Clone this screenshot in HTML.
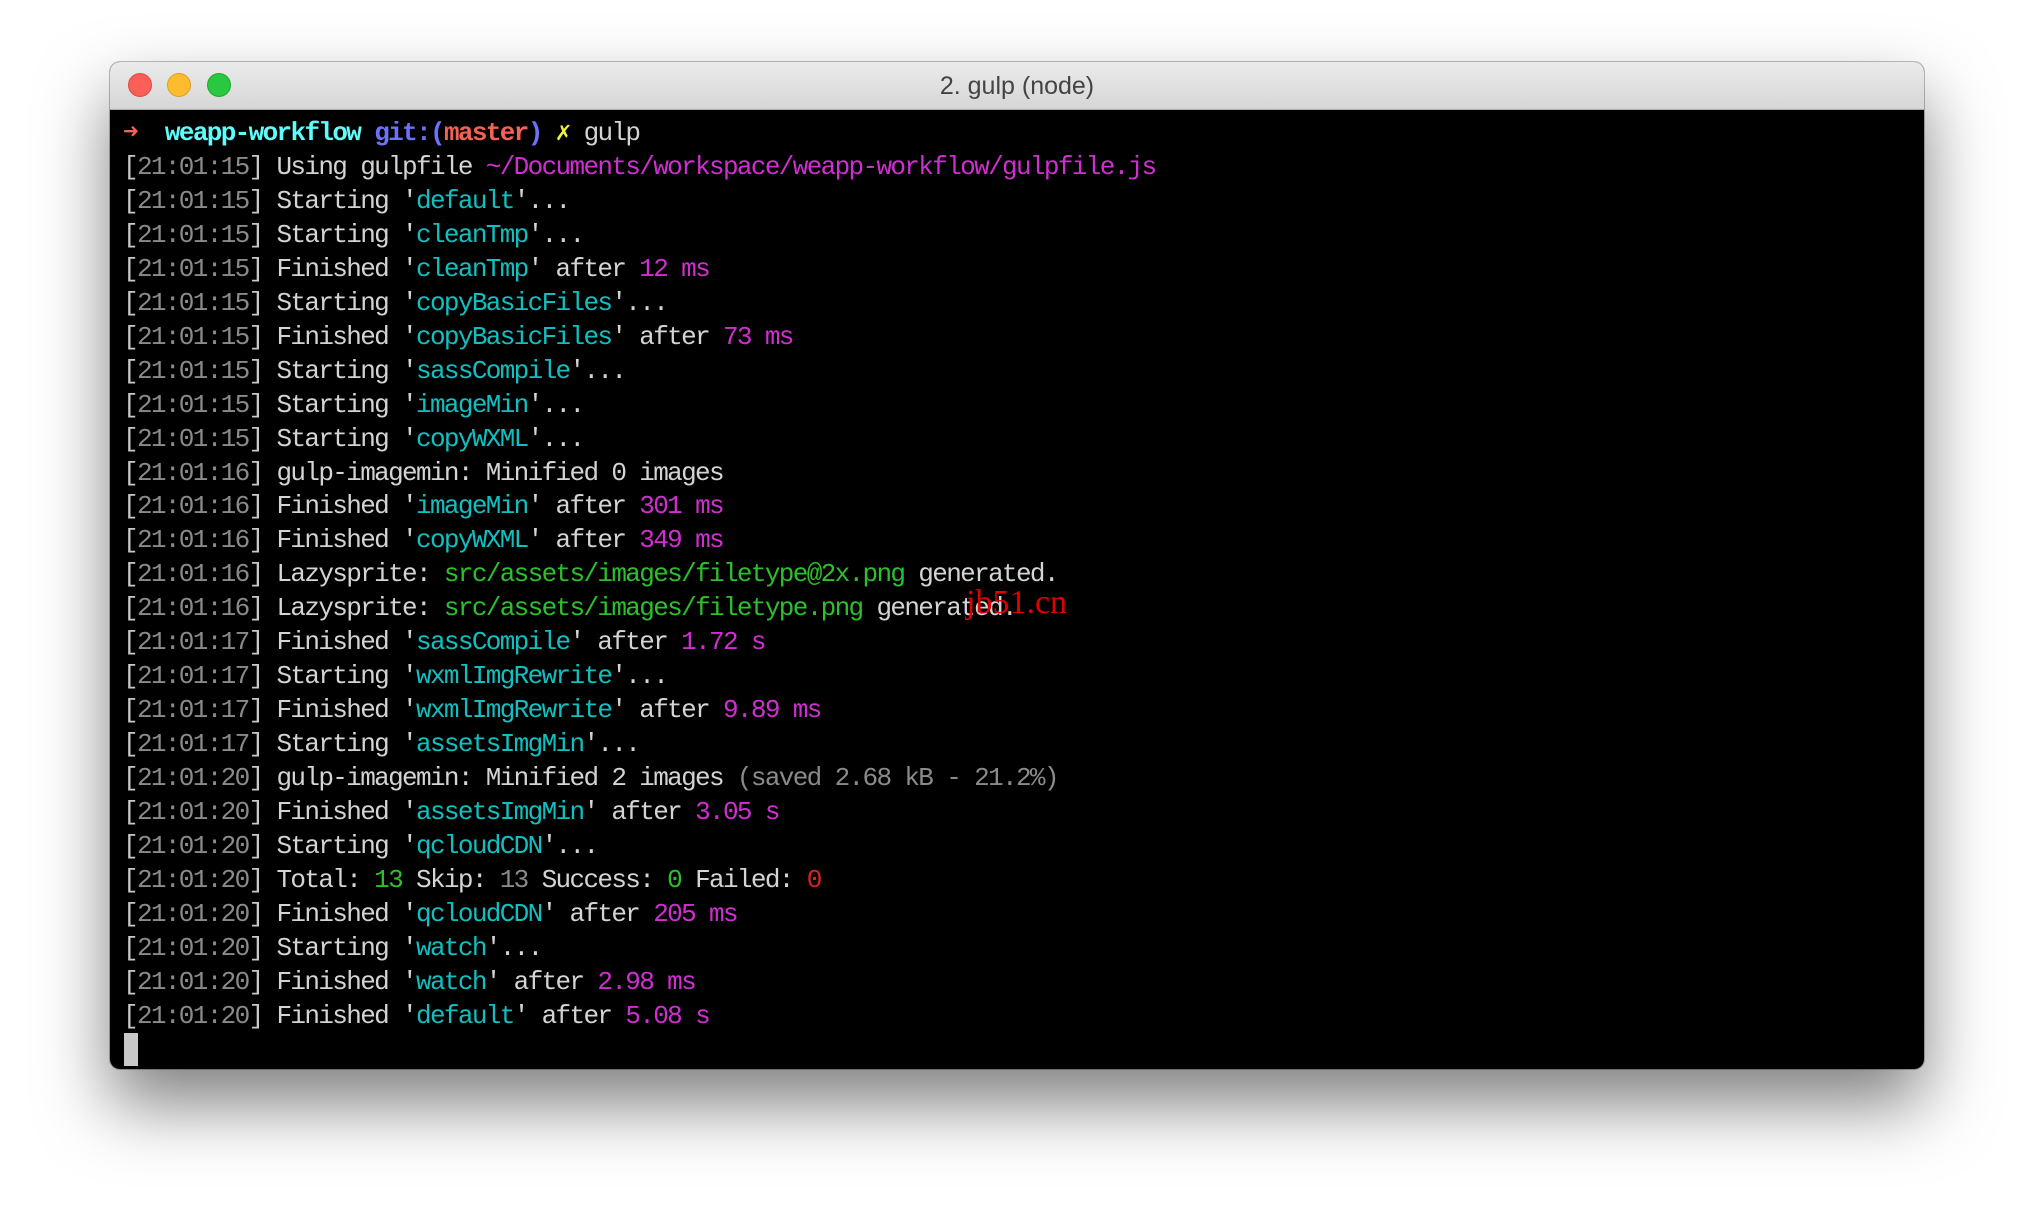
<!DOCTYPE html>
<html><head><meta charset="utf-8"><style>
html,body{margin:0;padding:0;background:#fff;width:2036px;height:1230px;overflow:hidden}
.win{position:absolute;left:110px;top:62px;width:1814px;height:1007px;border-radius:10px;background:#000;box-shadow:0 35px 70px rgba(0,0,0,.5),0 0 0 1px rgba(0,0,0,.25);overflow:hidden}
.tb{position:absolute;left:0;top:0;right:0;height:47px;background:linear-gradient(#ebebeb,#d6d6d6);border-bottom:1px solid #aaa}
.tl{position:absolute;top:11px;width:24px;height:24px;border-radius:50%}
.title{position:absolute;left:0;right:0;top:10px;text-align:center;font:25px "Liberation Sans",sans-serif;color:#444}
.term{position:absolute;left:13px;top:55px;font-family:"Liberation Mono",monospace;font-size:26px;letter-spacing:-1.65px;line-height:33.96px;color:#d4d4d4;white-space:pre}
.g{color:#8a8a8a}.b{color:#c8c8c8}.c{color:#10c0c0}.m{color:#d02fd0}.gr{color:#2cc02c}.r{color:#e02020}
.wm{position:absolute;left:856px;top:522px;font:34px "Liberation Serif",serif;color:#e00000}
.cur{position:absolute;left:14px;top:971px;width:14px;height:33px;background:#c8c8c8}
</style></head><body>
<div class="win">
<div class="tb">
<div class="tl" style="left:18px;background:#fc5f57;border:1px solid #de4a42;box-sizing:border-box"></div>
<div class="tl" style="left:57px;background:#fdbc2e;border:1px solid #de9f22;box-sizing:border-box"></div>
<div class="tl" style="left:97px;background:#29c840;border:1px solid #1aab2a;box-sizing:border-box"></div>
<div class="title">2. gulp (node)</div>
</div>
<div class="term"><b style="color:#f46156">➜</b>  <b style="color:#5ffcfc">weapp-workflow</b> <b style="color:#6c72ff">git:(</b><b style="color:#f46156">master</b><b style="color:#6c72ff">)</b> <b style="color:#f0f040">✗</b> gulp
<span class="b">[</span><span class="g">21:01:15</span><span class="b">]</span> Using gulpfile <span class="m">~/Documents/workspace/weapp-workflow/gulpfile.js</span>
<span class="b">[</span><span class="g">21:01:15</span><span class="b">]</span> Starting '<span class="c">default</span>'...
<span class="b">[</span><span class="g">21:01:15</span><span class="b">]</span> Starting '<span class="c">cleanTmp</span>'...
<span class="b">[</span><span class="g">21:01:15</span><span class="b">]</span> Finished '<span class="c">cleanTmp</span>' after <span class="m">12 ms</span>
<span class="b">[</span><span class="g">21:01:15</span><span class="b">]</span> Starting '<span class="c">copyBasicFiles</span>'...
<span class="b">[</span><span class="g">21:01:15</span><span class="b">]</span> Finished '<span class="c">copyBasicFiles</span>' after <span class="m">73 ms</span>
<span class="b">[</span><span class="g">21:01:15</span><span class="b">]</span> Starting '<span class="c">sassCompile</span>'...
<span class="b">[</span><span class="g">21:01:15</span><span class="b">]</span> Starting '<span class="c">imageMin</span>'...
<span class="b">[</span><span class="g">21:01:15</span><span class="b">]</span> Starting '<span class="c">copyWXML</span>'...
<span class="b">[</span><span class="g">21:01:16</span><span class="b">]</span> gulp-imagemin: Minified 0 images
<span class="b">[</span><span class="g">21:01:16</span><span class="b">]</span> Finished '<span class="c">imageMin</span>' after <span class="m">301 ms</span>
<span class="b">[</span><span class="g">21:01:16</span><span class="b">]</span> Finished '<span class="c">copyWXML</span>' after <span class="m">349 ms</span>
<span class="b">[</span><span class="g">21:01:16</span><span class="b">]</span> Lazysprite: <span class="gr">src/assets/images/filetype@2x.png</span> generated.
<span class="b">[</span><span class="g">21:01:16</span><span class="b">]</span> Lazysprite: <span class="gr">src/assets/images/filetype.png</span> generated.
<span class="b">[</span><span class="g">21:01:17</span><span class="b">]</span> Finished '<span class="c">sassCompile</span>' after <span class="m">1.72 s</span>
<span class="b">[</span><span class="g">21:01:17</span><span class="b">]</span> Starting '<span class="c">wxmlImgRewrite</span>'...
<span class="b">[</span><span class="g">21:01:17</span><span class="b">]</span> Finished '<span class="c">wxmlImgRewrite</span>' after <span class="m">9.89 ms</span>
<span class="b">[</span><span class="g">21:01:17</span><span class="b">]</span> Starting '<span class="c">assetsImgMin</span>'...
<span class="b">[</span><span class="g">21:01:20</span><span class="b">]</span> gulp-imagemin: Minified 2 images <span class="g">(saved 2.68 kB - 21.2%)</span>
<span class="b">[</span><span class="g">21:01:20</span><span class="b">]</span> Finished '<span class="c">assetsImgMin</span>' after <span class="m">3.05 s</span>
<span class="b">[</span><span class="g">21:01:20</span><span class="b">]</span> Starting '<span class="c">qcloudCDN</span>'...
<span class="b">[</span><span class="g">21:01:20</span><span class="b">]</span> Total: <span class="gr">13</span> Skip: <span class="g">13</span> Success: <span class="gr">0</span> Failed: <span class="r">0</span>
<span class="b">[</span><span class="g">21:01:20</span><span class="b">]</span> Finished '<span class="c">qcloudCDN</span>' after <span class="m">205 ms</span>
<span class="b">[</span><span class="g">21:01:20</span><span class="b">]</span> Starting '<span class="c">watch</span>'...
<span class="b">[</span><span class="g">21:01:20</span><span class="b">]</span> Finished '<span class="c">watch</span>' after <span class="m">2.98 ms</span>
<span class="b">[</span><span class="g">21:01:20</span><span class="b">]</span> Finished '<span class="c">default</span>' after <span class="m">5.08 s</span></div>
<div class="wm">jb51.cn</div>
<div class="cur"></div>
</div>
</body></html>
